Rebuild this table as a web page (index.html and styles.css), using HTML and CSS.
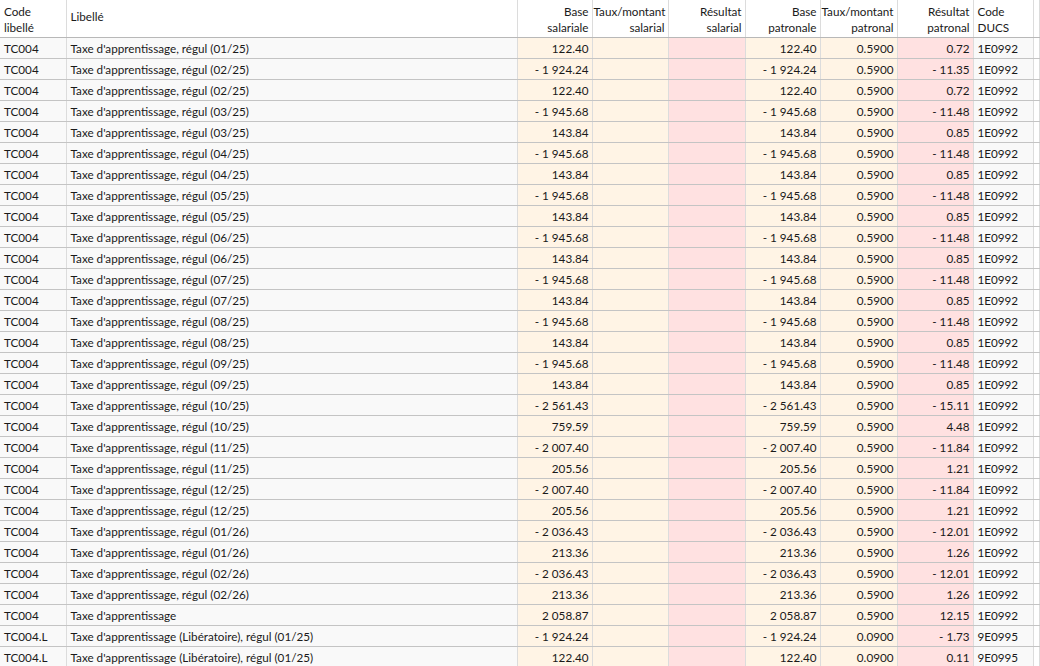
FILE: index.html
```html
<!DOCTYPE html>
<html lang="fr">
<head>
<meta charset="utf-8">
<title>Cotisations</title>
<link rel="stylesheet" href="styles.css">
</head>
<body>
<table class="grid">
<colgroup>
<col class="c-code"><col class="c-lib"><col class="c-num"><col class="c-num2"><col class="c-num3"><col class="c-num"><col class="c-num3"><col class="c-num2"><col class="c-ducs"><col class="c-rest">
</colgroup>
<thead>
<tr>
<th class="l">Code<br>libellé</th>
<th class="l top">Libellé</th>
<th>Base<br>salariale</th>
<th>Taux/montant<br>salarial</th>
<th>Résultat<br>salarial</th>
<th>Base<br>patronale</th>
<th>Taux/montant<br>patronal</th>
<th>Résultat<br>patronal</th>
<th class="l">Code<br>DUCS</th>
<th class="l"></th>
</tr>
</thead>
<tbody id="rows"></tbody>
</table>
<script src="app.js"></script>
</body>
</html>
```

FILE: styles.css
```css
html, body {
  margin: 0;
  padding: 0;
  background: #ffffff;
  overflow: hidden;
}
body {
  font-family: Lato, "Open Sans", sans-serif;
  font-size: 11.7px;
  color: #1a1a1a;
}
.grid {
  border-collapse: collapse;
  table-layout: fixed;
  width: 100%;
}
.c-code { width: 66px; }
.c-lib { width: 451px; }
.c-num { width: 75px; }
.c-num2 { width: 76px; }
.c-num3 { width: 77px; }
.c-ducs { width: 60px; }
th {
  height: 37px;
  padding: 0 3px 0 1px;
  font-weight: normal;
  text-align: right;
  vertical-align: middle;
  line-height: 16px;
  background: #ffffff;
  border-right: 1px solid #dcdcdc;
  border-bottom: 1px solid #b8b8b8;
  white-space: nowrap;
  overflow: hidden;
}
th.l { text-align: left; padding-left: 4px; }
th.top { vertical-align: top; padding-top: 8px; height: 29px; }
td {
  height: 20px;
  padding: 0 3px 0 4px;
  background: #f9f9f9;
  border-right: 1px solid #dcdcdc;
  border-bottom: 1px solid #c4c4c4;
  text-align: right;
  white-space: nowrap;
  overflow: hidden;
  line-height: 20px;
}
td.l { text-align: left; }
td.cream { background: #fff4e5; }
td.pink { background: #ffe1e1; }
td.white { background: #ffffff; }
```

FILE: app.js
```js
var N = "\u00a0";
function f(s) { return s.replace(/ /g, N); }
var data = [
  ["TC004","Taxe d'apprentissage, régul (01/25)","122.40","0.72","1E0992","0.5900"],
  ["TC004","Taxe d'apprentissage, régul (02/25)","- 1 924.24","- 11.35","1E0992","0.5900"],
  ["TC004","Taxe d'apprentissage, régul (02/25)","122.40","0.72","1E0992","0.5900"]
];
var months = ["03/25","04/25","05/25","06/25","07/25","08/25","09/25"];
months.forEach(function (m) {
  data.push(["TC004","Taxe d'apprentissage, régul (" + m + ")","- 1 945.68","- 11.48","1E0992","0.5900"]);
  data.push(["TC004","Taxe d'apprentissage, régul (" + m + ")","143.84","0.85","1E0992","0.5900"]);
});
data.push(
  ["TC004","Taxe d'apprentissage, régul (10/25)","- 2 561.43","- 15.11","1E0992","0.5900"],
  ["TC004","Taxe d'apprentissage, régul (10/25)","759.59","4.48","1E0992","0.5900"],
  ["TC004","Taxe d'apprentissage, régul (11/25)","- 2 007.40","- 11.84","1E0992","0.5900"],
  ["TC004","Taxe d'apprentissage, régul (11/25)","205.56","1.21","1E0992","0.5900"],
  ["TC004","Taxe d'apprentissage, régul (12/25)","- 2 007.40","- 11.84","1E0992","0.5900"],
  ["TC004","Taxe d'apprentissage, régul (12/25)","205.56","1.21","1E0992","0.5900"],
  ["TC004","Taxe d'apprentissage, régul (01/26)","- 2 036.43","- 12.01","1E0992","0.5900"],
  ["TC004","Taxe d'apprentissage, régul (01/26)","213.36","1.26","1E0992","0.5900"],
  ["TC004","Taxe d'apprentissage, régul (02/26)","- 2 036.43","- 12.01","1E0992","0.5900"],
  ["TC004","Taxe d'apprentissage, régul (02/26)","213.36","1.26","1E0992","0.5900"],
  ["TC004","Taxe d'apprentissage","2 058.87","12.15","1E0992","0.5900"],
  ["TC004.L","Taxe d'apprentissage (Libératoire), régul (01/25)","- 1 924.24","- 1.73","9E0995","0.0900"],
  ["TC004.L","Taxe d'apprentissage (Libératoire), régul (01/25)","122.40","0.11","9E0995","0.0900"]
);
var html = "";
data.forEach(function (r) {
  html += "<tr>" +
    "<td class=\"l\">" + r[0] + "</td>" +
    "<td class=\"l\">" + r[1] + "</td>" +
    "<td class=\"cream\">" + f(r[2]) + "</td>" +
    "<td class=\"cream\"></td>" +
    "<td class=\"pink\"></td>" +
    "<td class=\"cream\">" + f(r[2]) + "</td>" +
    "<td class=\"cream\">" + r[5] + "</td>" +
    "<td class=\"pink\">" + f(r[3]) + "</td>" +
    "<td class=\"l\">" + r[4] + "</td>" +
    "<td class=\"white\"></td>" +
    "</tr>";
});
document.getElementById("rows").innerHTML = html;
```
